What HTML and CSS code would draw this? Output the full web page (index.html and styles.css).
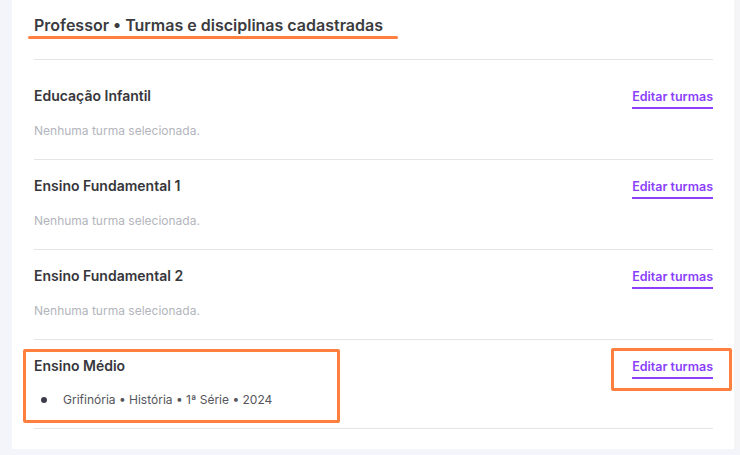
FILE: index.html
```html
<!DOCTYPE html>
<html>
<head>
    <title>Professor - Turmas</title>
    <link rel="stylesheet" href="styles.css">
</head>
<body>
    <div class="page">
        <div class="card">
            <div class="card-header">
                <h2>Professor • Turmas e disciplinas cadastradas</h2>
            </div>

            <div class="levels">
                <div class="level">
                    <div class="level-info">
                        <h3>Educação Infantil</h3>
                        <p class="empty">Nenhuma turma selecionada.</p>
                    </div>
                    <a class="edit-link" href="#">Editar turmas</a>
                </div>

                <div class="level">
                    <div class="level-info">
                        <h3>Ensino Fundamental 1</h3>
                        <p class="empty">Nenhuma turma selecionada.</p>
                    </div>
                    <a class="edit-link" href="#">Editar turmas</a>
                </div>

                <div class="level">
                    <div class="level-info">
                        <h3>Ensino Fundamental 2</h3>
                        <p class="empty">Nenhuma turma selecionada.</p>
                    </div>
                    <a class="edit-link" href="#">Editar turmas</a>
                </div>

                <div class="level">
                    <div class="level-info">
                        <h3>Ensino Médio</h3>
                        <ul class="classes">
                            <li>Grifinória • História • 1ª Série • 2024</li>
                        </ul>
                    </div>
                    <a class="edit-link" href="#">Editar turmas</a>
                </div>

                <div class="level">
                    <div class="level-info">
                        <h3>Ensino Superior</h3>
                    </div>
                </div>
            </div>

            <!-- review marks -->
            <div class="mark mark-title"></div>
            <div class="mark mark-box mark-level"></div>
            <div class="mark mark-box mark-edit"></div>
        </div>
        <div class="scroll-track"></div>
    </div>
</body>
</html>
```

FILE: styles.css
```css
body {
    margin: 0;
    font-family: Inter, "Noto Sans", sans-serif;
    background-color: #f4f4fb;
    color: #3a3a3f;
}

.page {
    display: flex;
    height: 449px;
    padding-left: 12px;
}

.card {
    position: relative;
    width: 722px;
    background-color: #fff;
    overflow: hidden;
}

.scroll-track {
    flex: 1;
    background-color: #f5f5f7;
}

.card-header {
    margin: 0 21px 0 22px;
    padding: 13px 0 22px;
    border-bottom: 1px solid #e3e3e6;
}

.card-header h2 {
    margin: 0;
    font-size: 16px;
    line-height: 24px;
    font-weight: 600;
    color: #3b3b40;
}

.levels {
    margin: 0 21px 0 22px;
    padding-top: 10px;
}

.level {
    display: flex;
    justify-content: space-between;
    align-items: flex-start;
    padding: 16px 0 20px;
    border-bottom: 1px solid #e5e5e8;
}

.level h3 {
    margin: 0;
    font-size: 14px;
    line-height: 20px;
    font-weight: 600;
    color: #36363b;
}

.empty {
    margin: 17px 0 0;
    font-size: 12px;
    line-height: 16px;
    color: #b3b5bd;
}

.classes {
    margin: 16px 0 0;
    padding: 0;
    list-style: none;
}

.classes li {
    display: flex;
    align-items: center;
    font-size: 12px;
    line-height: 16px;
    color: #55555c;
}

.classes li::before {
    content: "";
    width: 6px;
    height: 6px;
    margin: 0 16px 0 7px;
    border-radius: 50%;
    background-color: #3c3c48;
}

.edit-link {
    margin-top: 3px;
    padding-bottom: 2px;
    font-size: 12.5px;
    line-height: 16px;
    font-weight: 600;
    color: #8b3ffb;
    text-decoration: none;
    border-bottom: 2px solid #8b3ffb;
}

.mark {
    position: absolute;
    border-radius: 2px;
}

.mark-title {
    left: 16px;
    top: 36px;
    width: 370px;
    height: 3px;
    background-color: #ff7f3f;
}

.mark-box {
    border: 3px solid #ff7f3f;
}

.mark-level {
    left: 11px;
    top: 349px;
    width: 311px;
    height: 68px;
}

.mark-edit {
    left: 599px;
    top: 348px;
    width: 115px;
    height: 37px;
}
```
